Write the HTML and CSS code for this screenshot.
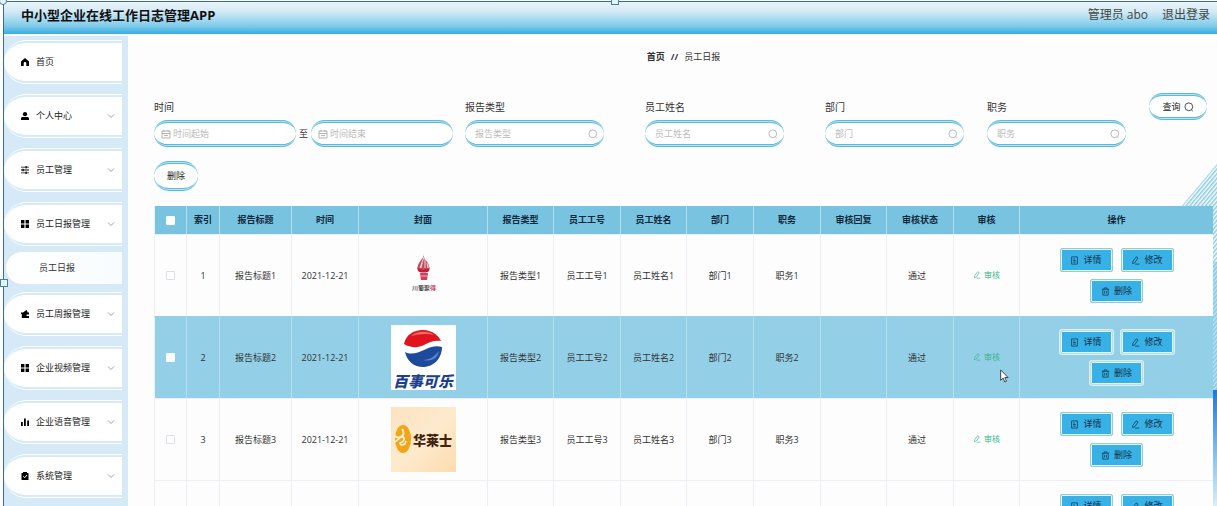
FILE: index.html
```html
<!DOCTYPE html>
<html lang="zh-CN">
<head>
<meta charset="utf-8">
<title>中小型企业在线工作日志管理APP</title>
<link rel="stylesheet" href="styles.css">
</head>
<body>
<svg class="defs" width="0" height="0" aria-hidden="true">
  <symbol id="i-search" viewBox="0 0 10 10"><circle cx="4.8" cy="4.8" r="3.9" fill="none" stroke="currentColor" stroke-width=".8"/><path d="M7.400 7.800L8.800 9.200" stroke="currentColor" stroke-width=".8" fill="none"/></symbol>
  <symbol id="i-date" viewBox="0 0 10 10"><path d="M1 2h8v7H1zM1 4.500h8M3 .8v2M7 .8v2M3 6.600h4" stroke="currentColor" stroke-width=".9" fill="none"/></symbol>
  <symbol id="i-down" viewBox="0 0 8 8"><path d="M1 2.500l3 3 3-3" stroke="currentColor" fill="none" stroke-width=".8"/></symbol>
  <symbol id="i-grid" viewBox="0 0 8 8"><path d="M0 0h3.400v3.400H0zM4.600 0H8v3.400H4.600zM0 4.600h3.400V8H0zM4.600 4.600H8V8H4.600z" fill="currentColor"/></symbol>
  <symbol id="i-doc" viewBox="0 0 10 10"><path d="M1.800 1h6.400v8H1.800zM3.500 3.300h2M3.500 5h3M3.500 6.800h3" stroke="currentColor" fill="none" stroke-width=".8"/></symbol>
  <symbol id="i-edit" viewBox="0 0 10 10"><path d="M5.800 1l2 1.200-3.600 5.300-2.400 1 .3-2.600zM4.500 9h4.800" stroke="currentColor" fill="none" stroke-width=".8"/></symbol>
  <symbol id="i-trash" viewBox="0 0 10 10"><path d="M1 2.500h8M3.500 2.500V1h3v1.500M2 2.500V9h6V2.500M4 4.300v3M6 4.300v3" stroke="currentColor" fill="none" stroke-width=".8"/></symbol>
</svg>

<div class="app">
  <header class="topbar">
    <h1 class="brand">中小型企业在线工作日志管理APP</h1>
    <div class="account"><span>管理员 abo</span><a class="logout" href="#">退出登录</a></div>
  </header>

  <div class="body">
    <nav class="side">
      <a class="item" href="#"><svg class="ic" viewBox="0 0 8 8"><path d="M4 0L0 3.600V8h2.700V5.300c0-1.600 2.600-1.600 2.600 0V8H8V3.600z"/></svg>首页</a>
      <a class="item" href="#"><svg class="ic" viewBox="0 0 8 8"><circle cx="4" cy="2.200" r="2.100"/><path d="M0 8V6.600C0 5.400 1 5 2 5h4c1 0 2 .4 2 1.600V8z"/></svg>个人中心<svg class="arrow"><use href="#i-down"/></svg></a>
      <a class="item" href="#"><svg class="ic" viewBox="0 0 8 8"><path d="M0 .8h8v.8H0zM0 3.600h8v.8H0zM0 6.400h8v.8H0zM4.500 0h1.200v2.400H4.500zM1.500 2.800h1.200v2.400H1.500zM4.500 5.600h1.200V8H4.500z"/></svg>员工管理<svg class="arrow"><use href="#i-down"/></svg></a>
      <a class="item" href="#"><svg class="ic"><use href="#i-grid"/></svg>员工日报管理<svg class="arrow"><use href="#i-down"/></svg></a>
      <a class="sub" href="#">员工日报</a>
      <a class="item" href="#"><svg class="ic" viewBox="0 0 8 8"><path d="M0 2.500h2L5.500 0l1.300 2.500H8v2H5.500v1.500H8V8H.8V4H0z"/></svg>员工周报管理<svg class="arrow"><use href="#i-down"/></svg></a>
      <a class="item" href="#"><svg class="ic"><use href="#i-grid"/></svg>企业视频管理<svg class="arrow"><use href="#i-down"/></svg></a>
      <a class="item" href="#"><svg class="ic" viewBox="0 0 8 8"><path d="M0 4h1.800v4H0zM3 .5h1.800V8H3zM6.200 2.500H8V8H6.200z"/></svg>企业语音管理<svg class="arrow"><use href="#i-down"/></svg></a>
      <a class="item" href="#"><svg class="ic" viewBox="0 0 8 8"><path d="M.5 1H2V0h4v1h1.500v7h-7z"/><path d="M2.300 4.300l1.400 1.400 2.300-2.700" fill="none" stroke="#fff"/></svg>系统管理<svg class="arrow"><use href="#i-down"/></svg></a>
    </nav>

    <main class="main">
      <svg class="decor" viewBox="0 0 36 342" aria-hidden="true">
        <defs>
          <pattern id="lines" width="3" height="3" patternUnits="userSpaceOnUse" patternTransform="rotate(40)"><rect width="1.500" height="3" fill="#86cce6"/></pattern>
          <linearGradient id="wave" x1="0" y1="0" x2="0" y2="1"><stop offset="0" stop-color="#1b78e0"/><stop offset=".6" stop-color="#8cc6f2"/><stop offset="1" stop-color="#d8eefb"/></linearGradient>
        </defs>
        <path d="M36 0V226H0V43z" fill="url(#lines)"/>
        <path d="M31 98h5v128h-5z" fill="#7cc8ee" opacity=".5"/>
        <path d="M31 226h5v116h-5z" fill="url(#wave)"/>
      </svg>

      <div class="crumbs"><b>首页</b><b>//</b><span>员工日报</span></div>

      <form class="filters">
        <div class="field">
          <label for="d1">时间</label>
          <div class="range">
            <span class="box date"><svg><use href="#i-date"/></svg><input id="d1" placeholder="时间起始"></span>
            <span class="to">至</span>
            <span class="box date"><svg><use href="#i-date"/></svg><input aria-label="时间结束" placeholder="时间结束"></span>
          </div>
        </div>
        <div class="field"><label for="f1">报告类型</label><span class="box"><input id="f1" placeholder="报告类型"><svg><use href="#i-search"/></svg></span></div>
        <div class="field"><label for="f2">员工姓名</label><span class="box"><input id="f2" placeholder="员工姓名"><svg><use href="#i-search"/></svg></span></div>
        <div class="field"><label for="f3">部门</label><span class="box"><input id="f3" placeholder="部门"><svg><use href="#i-search"/></svg></span></div>
        <div class="field"><label for="f4">职务</label><span class="box"><input id="f4" placeholder="职务"><svg><use href="#i-search"/></svg></span></div>
        <button class="pill query" type="button">查询<svg><use href="#i-search"/></svg></button>
      </form>
      <button class="pill remove" type="button">删除</button>

      <table class="grid">
        <colgroup><col class="c33"><col class="c33"><col class="c72"><col class="c67"><col class="c129"><col class="c66"><col class="c67"><col class="c66"><col class="c67"><col class="c67"><col class="c66"><col class="c67"><col class="c66"><col></colgroup>
        <thead>
          <tr><th><input type="checkbox" aria-label="全选"></th><th>索引</th><th>报告标题</th><th>时间</th><th>封面</th><th>报告类型</th><th>员工工号</th><th>员工姓名</th><th>部门</th><th>职务</th><th>审核回复</th><th>审核状态</th><th>审核</th><th>操作</th></tr>
        </thead>
        <tbody>
          <tr>
            <td><input type="checkbox" aria-label="选择1"></td><td>1</td><td>报告标题1</td><td>2021-12-21</td>
            <td><svg class="cover" viewBox="0 0 65 65"><rect width="65" height="65" fill="#fdfdfe"/><path d="M33 10c-1 5 2 7 4 10 1 2 1 4 0 6H27c-1-4 1-6 3-9 2-2 3-4 3-7z" fill="#c94a5c"/><path d="M33 14l-4 11M34 15l0 10M31 20l-1 5M36 20l1 5" stroke="#fdfdfe" stroke-width=".8"/><path d="M26 24c2 3 11 3 13 0l-1 4c-2 2-9 2-11 0z" fill="#c21f3a"/><path d="M29 30h8l-1 7h-6z" fill="#d04158"/><path d="M30 33h6" stroke="#fff" stroke-width=".6"/><text x="21" y="47" class="tiny">川蜀聚<tspan fill="#c8203c">得</tspan></text></svg></td>
            <td>报告类型1</td><td>员工工号1</td><td>员工姓名1</td><td>部门1</td><td>职务1</td><td></td><td class="state">通过</td>
            <td><button class="audit" type="button"><svg><use href="#i-edit"/></svg>审核</button></td>
            <td><div class="ops"><button type="button"><svg><use href="#i-doc"/></svg>详情</button><button type="button"><svg><use href="#i-edit"/></svg>修改</button><button type="button"><svg><use href="#i-trash"/></svg>删除</button></div></td>
          </tr>
          <tr class="active">
            <td><input type="checkbox" aria-label="选择2"></td><td>2</td><td>报告标题2</td><td>2021-12-21</td>
            <td><svg class="cover" viewBox="0 0 65 65"><rect width="65" height="65" fill="#fff"/><path d="M13 19C15 10 22 5 32 5c9 0 15 5 18 11-7-1-11 1-17 4-6 3-13 3-20-1z" fill="#e0141f"/><path d="M20 11c5-5 17-6 23-1-8-2-15-1-23 1z" fill="#f26a64"/><path d="M14 27c6 3 13 1 19-2 6-3 12-5 18-3 0 11-8 20-19 20-9 0-16-6-18-15z" fill="#1e4a9e"/><path d="M32 35c7 0 12-4 16-9-1 7-7 11-16 9z" fill="#5c86c8"/><text x="2" y="62" class="pepsi">百事可乐</text></svg></td>
            <td>报告类型2</td><td>员工工号2</td><td>员工姓名2</td><td>部门2</td><td>职务2</td><td></td><td class="state">通过</td>
            <td><button class="audit" type="button"><svg><use href="#i-edit"/></svg>审核</button></td>
            <td><div class="ops"><button type="button"><svg><use href="#i-doc"/></svg>详情</button><button type="button"><svg><use href="#i-edit"/></svg>修改</button><button type="button"><svg><use href="#i-trash"/></svg>删除</button></div></td>
          </tr>
          <tr>
            <td><input type="checkbox" aria-label="选择3"></td><td>3</td><td>报告标题3</td><td>2021-12-21</td>
            <td><svg class="cover" viewBox="0 0 65 65"><defs><linearGradient id="cream" x1="0" y1="0" x2="1" y2="1"><stop offset="0" stop-color="#fde3c0"/><stop offset=".5" stop-color="#fdeacd"/><stop offset="1" stop-color="#fbdcae"/></linearGradient></defs><rect width="65" height="65" fill="url(#cream)"/><ellipse cx="12" cy="32" rx="8" ry="14" fill="#f2a516"/><path d="M3 27c1 4 6 5 9 1 1-2 0-5-1-6" stroke="#fdebd0" stroke-width="2" fill="none"/><path d="M3 35c4 0 5-6 9-5 3 2 0 5-3 6 0 3 5 3 6-2" stroke="#fdf3e2" stroke-width="1.600" fill="none"/><text x="22" y="38" class="wallace">华莱士</text></svg></td>
            <td>报告类型3</td><td>员工工号3</td><td>员工姓名3</td><td>部门3</td><td>职务3</td><td></td><td class="state">通过</td>
            <td><button class="audit" type="button"><svg><use href="#i-edit"/></svg>审核</button></td>
            <td><div class="ops"><button type="button"><svg><use href="#i-doc"/></svg>详情</button><button type="button"><svg><use href="#i-edit"/></svg>修改</button><button type="button"><svg><use href="#i-trash"/></svg>删除</button></div></td>
          </tr>
          <tr>
            <td><input type="checkbox" aria-label="选择4"></td><td></td><td></td><td></td>
            <td><svg class="cover" viewBox="0 0 65 65"><rect width="65" height="65" fill="#fefdfe"/><circle cx="20" cy="23" r="5" fill="#f0a6c0"/></svg></td>
            <td></td><td></td><td></td><td></td><td></td><td></td><td></td>
            <td></td>
            <td><div class="ops"><button type="button"><svg><use href="#i-doc"/></svg>详情</button><button type="button"><svg><use href="#i-edit"/></svg>修改</button><button type="button"><svg><use href="#i-trash"/></svg>删除</button></div></td>
          </tr>
        </tbody>
      </table>
    </main>
  </div>
</div>

<div class="frame" aria-hidden="true"><i class="knob corner"></i><i class="knob top"></i><i class="knob left"></i></div>
<svg class="cursor" viewBox="0 0 9 14" aria-hidden="true"><path d="M.7.9v10.400l2.400-2.200 1.700 3.900 1.700-.8-1.700-3.700h3.300z" fill="#fff" stroke="#333" stroke-width=".9"/></svg>
</body>
</html>
```
FILE: styles.css
```css
* { box-sizing: border-box; }
body {
  margin: 0;
  height: 100vh;
  overflow: hidden;
  position: relative;
  background: #fdfdfe;
  color: #333;
  font: 9px/14px "Open Sans", "Noto Sans CJK SC", sans-serif;
}
a { color: inherit; text-decoration: none; }
button, input { font: inherit; color: inherit; }
button { cursor: pointer; }
.defs { position: absolute; }

.app {
  height: 100%;
  padding: 2px 0 0 4px;
  display: flex;
  flex-direction: column;
}
.topbar {
  flex: none;
  height: 32px;
  padding: 0 7px 6px 17px;
  display: flex;
  align-items: center;
  justify-content: space-between;
  background: linear-gradient(#eaf4f9, #d3eaf5 30%, #7fcbea 75%, #35aee2);
}
.brand { margin: 0; font-size: 13px; line-height: 18px; font-weight: 700; color: #111; }
.account { display: flex; gap: 14px; font-size: 12px; line-height: 18px; color: #444; }

.body { flex: 1; min-height: 0; display: flex; padding-top: 2px; }
.side {
  flex: none;
  width: 124px;
  padding: 4px 6px 0 0;
  background: #d5eaf6;
  display: flex;
  flex-direction: column;
  overflow: hidden;
}
.item {
  flex: none;
  height: 44px;
  margin-bottom: 10px;
  padding: 0 7px 0 17px;
  display: flex;
  align-items: center;
  border: 4px double #fff;
  border-width: 4px 0;
  border-radius: 22px 0 0 22px;
  background: #fff;
  background-clip: padding-box;
  color: #222;
}
.ic { width: 8px; height: 8px; margin-right: 7px; fill: #000; color: #000; }
.arrow { width: 8px; height: 8px; margin-left: auto; color: #888; }
.sub {
  flex: none;
  height: 32px;
  margin: -4px 0 8px 2px;
  padding-left: 33px;
  border-radius: 16px 0 0 16px;
  background: linear-gradient(90deg, #fff, #f8fcfe);
  line-height: 32px;
}

.main { flex: 1; min-width: 0; padding: 14px 4px 0 26px; position: relative; overflow: hidden; }
.main > :not(.decor) { position: relative; }
.main > .decor { position: absolute; right: 0; top: 128px; width: 36px; height: 342px; }
.crumbs { display: flex; justify-content: center; gap: 6px; margin-bottom: 29px; }

.filters {
  display: grid;
  grid-template-columns: 311fr 180fr 180fr 162fr 162fr 64fr;
  align-items: start;
}
.field { padding-top: 7px; }
.field label { display: block; margin-bottom: 6px; font-size: 10px; line-height: 14px; }
.range { display: flex; align-items: center; }
.to { width: 15px; text-align: center; }
.box, .pill {
  border: 3px double #5bbbda;
  border-width: 3px 0;
  border-radius: 14px;
  background: linear-gradient(#fff, #fff) padding-box, linear-gradient(#b4e2ef, #b4e2ef) border-box;
}
.box { width: 139px; height: 27px; padding: 0 6px 0 10px; display: flex; align-items: center; gap: 2px; }
.box.date { width: 142px; padding-left: 7px; }
.box svg { flex: none; width: 10px; height: 10px; color: #aaa; }
.box input { flex: 1; min-width: 0; padding: 0; border: 0; outline: 0; background: none; }
.box input::placeholder { color: #bbb; }
.pill { padding: 0; display: flex; align-items: center; justify-content: center; gap: 3px; color: #222; }
.pill svg { width: 10px; height: 10px; }
.query { width: 58px; height: 27px; }
.remove { width: 44px; height: 30px; margin: 14px 0 15px; border-radius: 15px; }

.grid { width: 100%; table-layout: fixed; border-collapse: separate; border-spacing: 0; }
.c33 { width: 33px; } .c66 { width: 66px; } .c67 { width: 67px; }
.c72 { width: 72px; } .c129 { width: 129px; }
.grid th, .grid td {
  padding: 0;
  text-align: center;
  vertical-align: middle;
  border-right: 1px solid #eeeef4;
  border-top: 1px solid #eeeef4;
  background: #fdfdfe;
}
.grid th:first-child, .grid td:first-child { border-left: 1px solid #eeeef4; }
.grid th { height: 28px; background: #78c3e0; border-right-color: #b4dfee; border-top: 0; color: #12283a; }
.grid td { height: 82px; }
.grid th:last-child, .grid td:last-child { border-right: 0; }
.grid .active td { background: #94cfe8; border-right-color: #b4dfee; border-top-color: #94cfe8; }
.grid .state { padding-right: 6px; }
.grid input {
  appearance: none;
  display: block;
  width: 9px;
  height: 9px;
  margin: 0 auto;
  border: 1px solid #dcdfe6;
  border-radius: 1px;
  background: #fff;
}
.grid th input, .active input { border-color: #fff; }
.cover { display: block; width: 65px; height: 65px; margin: 0 auto; }
.tiny { font-size: 6px; font-weight: 500; fill: #333; }
.pepsi { font-size: 15px; font-weight: 900; font-style: italic; fill: #1d3f8c; }
.wallace { font-size: 13px; font-weight: 900; fill: #42210f; }

.audit {
  padding: 0;
  border: 0;
  background: none;
  display: inline-flex;
  align-items: center;
  gap: 3px;
  font-size: 8px;
  color: #35b58b;
}
.audit svg { width: 8px; height: 8px; }
.ops { display: flex; flex-wrap: wrap; justify-content: center; gap: 7px 8px; width: 130px; margin: 0 auto; }
.ops button {
  width: 53px;
  height: 24px;
  padding: 0;
  display: flex;
  align-items: center;
  justify-content: center;
  gap: 4px;
  border: 1px solid #8fcdd8;
  border-radius: 2px;
  background: #38b2e6;
  box-shadow: inset 0 0 0 1px #e4f4f2;
  color: #14304a;
}
.active .ops button { border-color: #b9dfe2; box-shadow: inset 0 0 0 1px #e4f4f2, 0 0 0 1px #d9f0f2; }
.ops svg { width: 9px; height: 9px; }

.frame {
  position: absolute;
  inset: 1px 0 0 3px;
  border-top: 1px solid #3c6b94;
  border-left: 1px solid #3c6b94;
  pointer-events: none;
}
.knob { position: absolute; width: 8px; height: 8px; border: 1px solid #4a7fa5; background: #e4f5fb; }
.corner { left: -5px; top: -5px; border-radius: 50%; }
.top { left: 50%; top: -5px; }
.left { left: -4px; top: 277px; }
.cursor { position: absolute; left: 1000px; top: 369px; width: 9px; height: 14px; }
```
